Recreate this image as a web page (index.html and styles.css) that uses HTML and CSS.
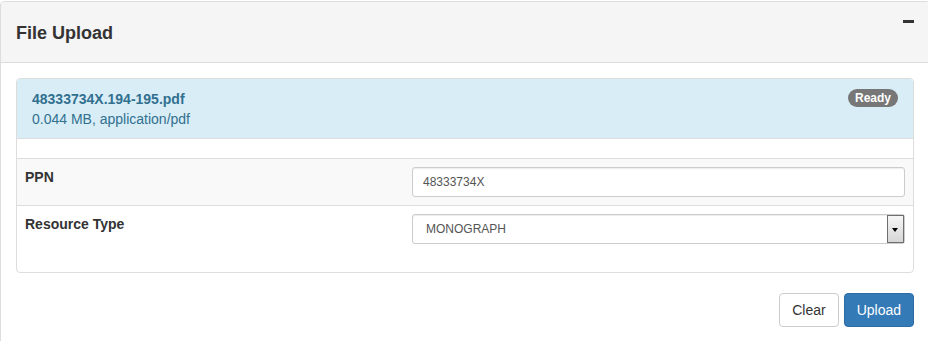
FILE: index.html
```html
<!DOCTYPE html>
<html lang="en">
<head>
<meta charset="utf-8">
<title>File Upload</title>
<link rel="stylesheet" href="styles.css">
</head>
<body>
<div class="panel">
  <div class="panel-heading">
    <h3 class="panel-title">File Upload</h3>
    <span class="collapse-icon" aria-label="Collapse"></span>
  </div>
  <div class="panel-body">
    <div class="file-panel">
      <div class="file-heading">
        <div class="file-info">
          <div class="file-name">48333734X.194-195.pdf</div>
          <div class="file-meta">0.044 MB, application/pdf</div>
        </div>
        <span class="badge">Ready</span>
      </div>
      <div class="file-body">
        <table class="meta-table">
          <tbody>
            <tr class="striped">
              <td class="label-cell">PPN</td>
              <td class="field-cell"><input class="form-input" type="text" value="48333734X"></td>
            </tr>
            <tr>
              <td class="label-cell">Resource Type</td>
              <td class="field-cell">
                <div class="select-wrap">
                  <select class="form-select">
                    <option>MONOGRAPH</option>
                  </select>
                  <span class="select-arrow"></span>
                </div>
              </td>
            </tr>
          </tbody>
        </table>
      </div>
    </div>
    <div class="actions">
      <button class="btn btn-default" type="button">Clear</button>
      <button class="btn btn-primary" type="button">Upload</button>
    </div>
  </div>
</div>
</body>
</html>
```
FILE: styles.css
```css
html, body {
  margin: 0;
  padding: 0;
  overflow: hidden;
  background: #fff;
}

body {
  font-family: "Liberation Sans", Arial, Helvetica, sans-serif;
  font-size: 14px;
  line-height: 20px;
  color: #333;
}

.panel {
  box-sizing: border-box;
  width: 930px;
  margin-top: 1px;
  border: 1px solid #ddd;
  border-radius: 4px;
  background: #fff;
  min-height: 400px;
}

.panel-heading {
  display: flex;
  justify-content: space-between;
  align-items: flex-start;
  padding: 21px 15px 19px;
  background: #f5f5f5;
  border-bottom: 1px solid #ddd;
  border-radius: 3px 3px 0 0;
}

.panel-title {
  margin: 0;
  font-size: 18px;
  line-height: 20px;
  font-weight: bold;
  color: #333;
}

.collapse-icon {
  display: block;
  width: 11px;
  height: 3px;
  margin-top: -3px;
  background: #333;
}

.panel-body {
  padding: 15px;
}

.file-panel {
  border: 1px solid #ddd;
  border-radius: 4px;
  background: #fff;
}

.file-heading {
  display: flex;
  justify-content: space-between;
  align-items: flex-start;
  padding: 10px 15px 9px;
  background: #d9edf7;
  color: #31708f;
  border-bottom: 1px solid #ddd;
  border-radius: 3px 3px 0 0;
}

.file-name {
  font-weight: bold;
}

.badge {
  display: inline-block;
  padding: 3px 7px;
  font-size: 12px;
  line-height: 12px;
  font-weight: bold;
  color: #fff;
  background: #777;
  border-radius: 10px;
}

.file-body {
  padding-top: 19px;
}

.meta-table {
  width: 100%;
  border-collapse: collapse;
  border-spacing: 0;
  margin-bottom: 20px;
}

.meta-table td {
  padding: 8px;
  border-top: 1px solid #ddd;
  vertical-align: top;
  line-height: 20px;
}

.meta-table .striped {
  background: #f9f9f9;
}

.label-cell {
  width: 371px;
  font-weight: bold;
}

.form-input,
.form-select {
  display: block;
  box-sizing: border-box;
  width: 100%;
  height: 30px;
  margin: 0;
  padding: 5px 10px;
  font-family: "Liberation Sans", Arial, Helvetica, sans-serif;
  font-size: 12px;
  line-height: 18px;
  color: #555;
  background: #fff;
  border: 1px solid #ccc;
  border-radius: 3px;
  box-shadow: inset 0 1px 1px rgba(0, 0, 0, 0.075);
  outline: none;
}

.select-wrap {
  position: relative;
}

.form-select {
  -webkit-appearance: none;
  appearance: none;
  padding-left: 13px;
}

.select-arrow {
  position: absolute;
  top: 1px;
  right: 1px;
  box-sizing: border-box;
  width: 17px;
  height: 28px;
  border: 1px solid #6e6e6e;
  background: linear-gradient(#f6f6f6, #d6d6d6);
  pointer-events: none;
}

.select-arrow::after {
  content: "";
  position: absolute;
  left: 4px;
  top: 12px;
  width: 0;
  height: 0;
  border-left: 3.5px solid transparent;
  border-right: 3.5px solid transparent;
  border-top: 4px solid #000;
}

.actions {
  display: flex;
  justify-content: flex-end;
  gap: 5px;
  margin-top: 20px;
}

.btn {
  box-sizing: border-box;
  margin: 0;
  padding: 6px 12px;
  font-family: "Liberation Sans", Arial, Helvetica, sans-serif;
  font-size: 14px;
  line-height: 20px;
  border: 1px solid transparent;
  border-radius: 4px;
  cursor: pointer;
}

.btn-default {
  color: #333;
  background: #fff;
  border-color: #ccc;
}

.btn-primary {
  color: #fff;
  background: #337ab7;
  border-color: #2e6da4;
}
```
